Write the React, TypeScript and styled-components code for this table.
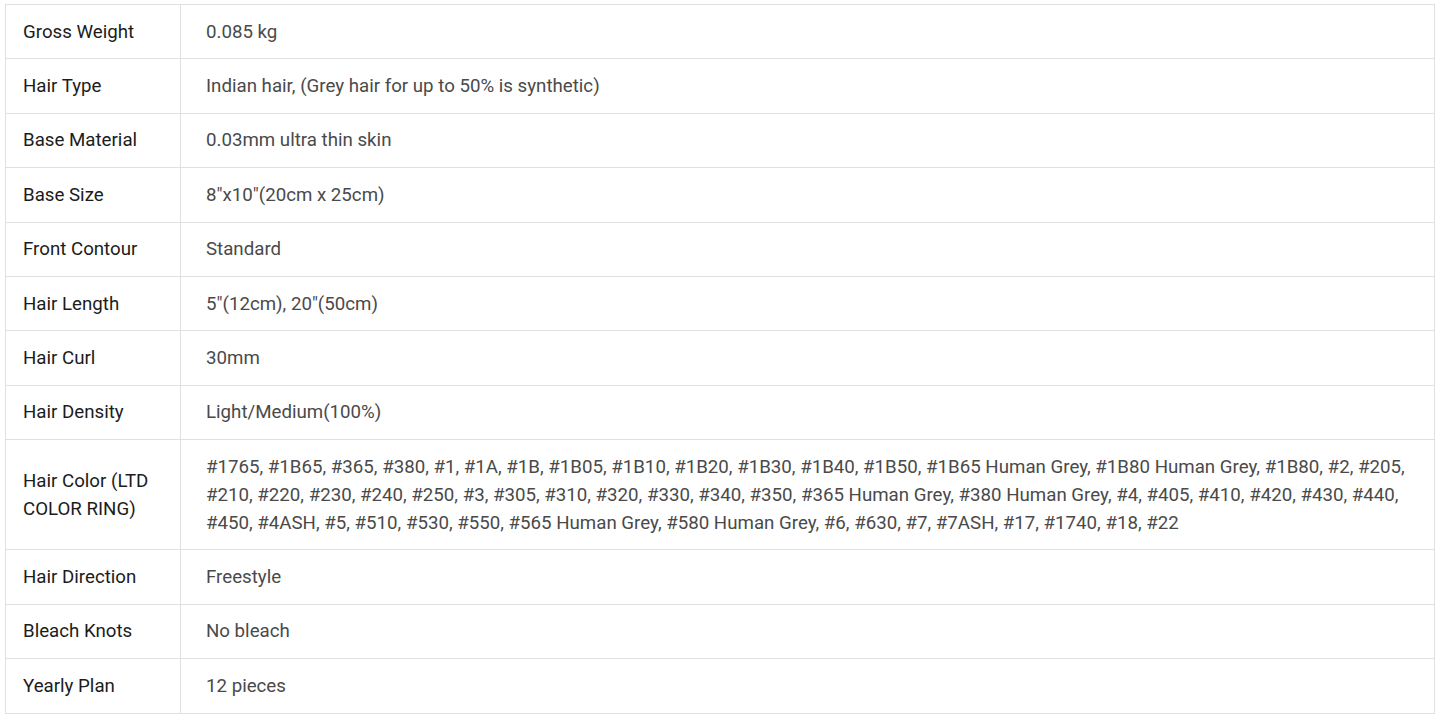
import React from "react";
import styled, { createGlobalStyle } from "styled-components";

const Global = createGlobalStyle`
  html, body { margin: 0; padding: 0; background: #fff; }
  body { font-family: Roboto, "Noto Sans", Arial, sans-serif; }
`;

const Wrap = styled.div`
  padding: 4px 10px 0 5px;
`;

const Table = styled.table`
  width: 1430px;
  border-collapse: collapse;
  border: 1px solid #e0e0e0;
`;

const Row = styled.tr`
  border-bottom: 1px solid #e0e0e0;
`;

const Label = styled.td`
  width: 140px;
  padding: 12.7px 17px;
  border-right: 1px solid #e0e0e0;
  font-size: 18.7px;
  line-height: 28px;
  color: #1c1c1c;
  vertical-align: middle;
`;

const Value = styled.td`
  padding: 12.7px 24px 12.7px 25px;
  font-size: 18.7px;
  line-height: 28px;
  color: #4a4a4a;
  vertical-align: middle;
`;

const rows: [string, string][] = [
  ["Gross Weight", "0.085 kg"],
  ["Hair Type", "Indian hair, (Grey hair for up to 50% is synthetic)"],
  ["Base Material", "0.03mm ultra thin skin"],
  ["Base Size", '8"x10"(20cm x 25cm)'],
  ["Front Contour", "Standard"],
  ["Hair Length", '5"(12cm), 20"(50cm)'],
  ["Hair Curl", "30mm"],
  ["Hair Density", "Light/Medium(100%)"],
  [
    "Hair Color (LTD COLOR RING)",
    "#1765, #1B65, #365, #380, #1, #1A, #1B, #1B05, #1B10, #1B20, #1B30, #1B40, #1B50, #1B65 Human Grey, #1B80 Human Grey, #1B80, #2, #205, #210, #220, #230, #240, #250, #3, #305, #310, #320, #330, #340, #350, #365 Human Grey, #380 Human Grey, #4, #405, #410, #420, #430, #440, #450, #4ASH, #5, #510, #530, #550, #565 Human Grey, #580 Human Grey, #6, #630, #7, #7ASH, #17, #1740, #18, #22",
  ],
  ["Hair Direction", "Freestyle"],
  ["Bleach Knots", "No bleach"],
  ["Yearly Plan", "12 pieces"],
];

export default function App() {
  return (
    <>
      <Global />
      <Wrap>
        <Table>
          <tbody>
            {rows.map(([k, v]) => (
              <Row key={k}>
                <Label>{k}</Label>
                <Value>{v}</Value>
              </Row>
            ))}
          </tbody>
        </Table>
      </Wrap>
    </>
  );
}
